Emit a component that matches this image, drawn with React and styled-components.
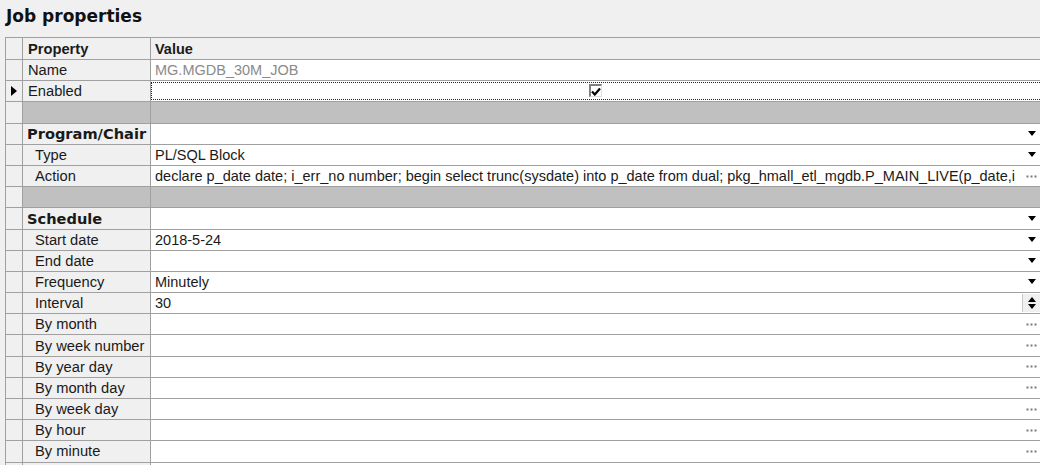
import React from 'react'
import styled, { createGlobalStyle } from 'styled-components'

const GlobalStyle = createGlobalStyle`
  html, body {
    margin: 0;
    padding: 0;
    background: #f0f0f0;
  }
  body {
    font-family: "Liberation Sans", Arial, sans-serif;
  }
`

const Page = styled.div`
  width: 1040px;
  height: 465px;
  overflow: hidden;
  background: #f0f0f0;
  padding: 6px 0 0 5px;
  box-sizing: border-box;
`

const Title = styled.div`
  font-family: "DejaVu Sans", Verdana, sans-serif;
  font-weight: bold;
  font-size: 17px;
  color: #111;
  height: 31px;
  padding-left: 1px;
`

const Grid = styled.div`
  border-top: 1px solid #a0a0a0;
  border-left: 1px solid #a0a0a0;
  display: flex;
  flex-direction: column;
`

const Row = styled.div`
  display: grid;
  grid-template-columns: 17px 128px 1fr;
  height: ${p => (p.$header ? 22 : 21.2)}px;
  flex-shrink: 0;
  box-sizing: border-box;
`

const Indicator = styled.div`
  background: #f0f0f0;
  border-right: 1px solid #a0a0a0;
  border-bottom: 1px solid #a0a0a0;
  display: flex;
  align-items: center;
  justify-content: center;
`

const NameCell = styled.div`
  background: ${p => (p.$gray ? '#c0c0c0' : '#f0f0f0')};
  border-right: 1px solid #a0a0a0;
  border-bottom: 1px solid #a0a0a0;
  display: flex;
  align-items: center;
  padding-left: ${p => p.$indent}px;
  font-family: ${p => (p.$group ? '"DejaVu Sans", Verdana, sans-serif' : 'inherit')};
  font-size: ${p => (p.$group ? 14.6 : 14.7)}px;
  font-weight: ${p => (p.$bold ? 'bold' : 'normal')};
  color: #1a1a1a;
  white-space: nowrap;
  overflow: hidden;
`

const ValueCell = styled.div`
  position: relative;
  background: ${p => (p.$gray ? '#c0c0c0' : p.$header ? '#f0f0f0' : '#fff')};
  border-bottom: 1px solid #a0a0a0;
  display: flex;
  align-items: center;
  padding-left: 4px;
  padding-right: 18px;
  font-size: 14.5px;
  font-weight: ${p => (p.$bold ? 'bold' : 'normal')};
  color: ${p => (p.$muted ? '#8a8a8a' : '#1a1a1a')};
  white-space: nowrap;
  overflow: hidden;
`

const FocusBox = styled.div`
  position: absolute;
  inset: 1px 0 1px 0;
  border-top: 1px dotted #222;
  border-bottom: 1px dotted #222;
  border-left: 1px dotted #222;
`

const CheckBox = styled.div`
  position: absolute;
  left: 438px;
  top: 3px;
  width: 13px;
  height: 13px;
  box-sizing: border-box;
  background: #fff;
  border-top: 2px solid #808080;
  border-left: 2px solid #808080;
  border-right: 1px solid #e0e0e0;
  border-bottom: 1px solid #e0e0e0;
  display: flex;
  align-items: center;
  justify-content: center;
`

const EditButton = styled.div`
  position: absolute;
  right: 0;
  top: 1px;
  bottom: 1px;
  width: 17px;
  background: ${p => (p.$spin ? '#f0f0f0' : '#fff')};
  border-left: ${p => (p.$spin ? '1px solid #c8c8c8' : 'none')};
  display: flex;
  flex-direction: column;
  align-items: center;
  justify-content: center;
  gap: 2px;
`

const Down = () => (
  <svg width="8" height="5" viewBox="0 0 8 5">
    <path d="M0 0H8L4 5Z" fill="#000" />
  </svg>
)

const Up = () => (
  <svg width="8" height="5" viewBox="0 0 8 5">
    <path d="M0 5H8L4 0Z" fill="#000" />
  </svg>
)

const Ellipsis = () => (
  <svg width="11" height="3" viewBox="0 0 11 3">
    <rect x="0.5" y="0.5" width="2" height="2" fill="#7a7a7a" />
    <rect x="4.5" y="0.5" width="2" height="2" fill="#7a7a7a" />
    <rect x="8.5" y="0.5" width="2" height="2" fill="#7a7a7a" />
  </svg>
)

const Arrow = () => (
  <svg width="6" height="10" viewBox="0 0 6 10">
    <path d="M0 0L6 5L0 10Z" fill="#000" />
  </svg>
)

const Check = () => (
  <svg width="10" height="9" viewBox="0 0 10 9">
    <path d="M1 4.5L3.8 7.5L9 1.5" stroke="#000" strokeWidth="2.2" fill="none" />
  </svg>
)

const actionText =
  'declare p_date date; i_err_no number; begin select trunc(sysdate) into p_date from dual; pkg_hmall_etl_mgdb.P_MAIN_LIVE(p_date,i'

const rows = [
  { name: 'Name', value: 'MG.MGDB_30M_JOB', muted: true, indent: 5 },
  { name: 'Enabled', indent: 5, current: true, check: true },
  { gray: true },
  { name: 'Program/Chair', group: true, edit: 'drop' },
  { name: 'Type', value: 'PL/SQL Block', indent: 12, edit: 'drop' },
  { name: 'Action', value: actionText, indent: 12, edit: 'dots' },
  { gray: true },
  { name: 'Schedule', group: true, edit: 'drop' },
  { name: 'Start date', value: '2018-5-24', indent: 12, edit: 'drop' },
  { name: 'End date', indent: 12, edit: 'drop' },
  { name: 'Frequency', value: 'Minutely', indent: 12, edit: 'drop' },
  { name: 'Interval', value: '30', indent: 12, edit: 'spin' },
  { name: 'By month', indent: 12, edit: 'dots' },
  { name: 'By week number', indent: 12, edit: 'dots' },
  { name: 'By year day', indent: 12, edit: 'dots' },
  { name: 'By month day', indent: 12, edit: 'dots' },
  { name: 'By week day', indent: 12, edit: 'dots' },
  { name: 'By hour', indent: 12, edit: 'dots' },
  { name: 'By minute', indent: 12, edit: 'dots' },
  { name: '', indent: 12 },
]

const Editor = ({ kind }) => {
  if (kind === 'drop')
    return (
      <EditButton>
        <Down />
      </EditButton>
    )
  if (kind === 'spin')
    return (
      <EditButton $spin>
        <Up />
        <Down />
      </EditButton>
    )
  if (kind === 'dots')
    return (
      <EditButton>
        <Ellipsis />
      </EditButton>
    )
  return null
}

export default function App() {
  return (
    <Page>
      <GlobalStyle />
      <Title>Job properties</Title>
      <Grid>
        <Row $header>
          <Indicator />
          <NameCell $bold $indent={5}>Property</NameCell>
          <ValueCell $header $bold>Value</ValueCell>
        </Row>
        {rows.map((r, i) =>
          r.gray ? (
            <Row key={i}>
              <Indicator />
              <NameCell $gray />
              <ValueCell $gray />
            </Row>
          ) : (
            <Row key={i}>
              <Indicator>{r.current && <Arrow />}</Indicator>
              <NameCell $bold={r.group} $group={r.group} $indent={r.group ? 4 : r.indent}>
                {r.name}
              </NameCell>
              <ValueCell $muted={r.muted}>
                {r.value}
                {r.current && <FocusBox />}
                {r.check && (
                  <CheckBox>
                    <Check />
                  </CheckBox>
                )}
                <Editor kind={r.edit} />
              </ValueCell>
            </Row>
          )
        )}
      </Grid>
    </Page>
  )
}
